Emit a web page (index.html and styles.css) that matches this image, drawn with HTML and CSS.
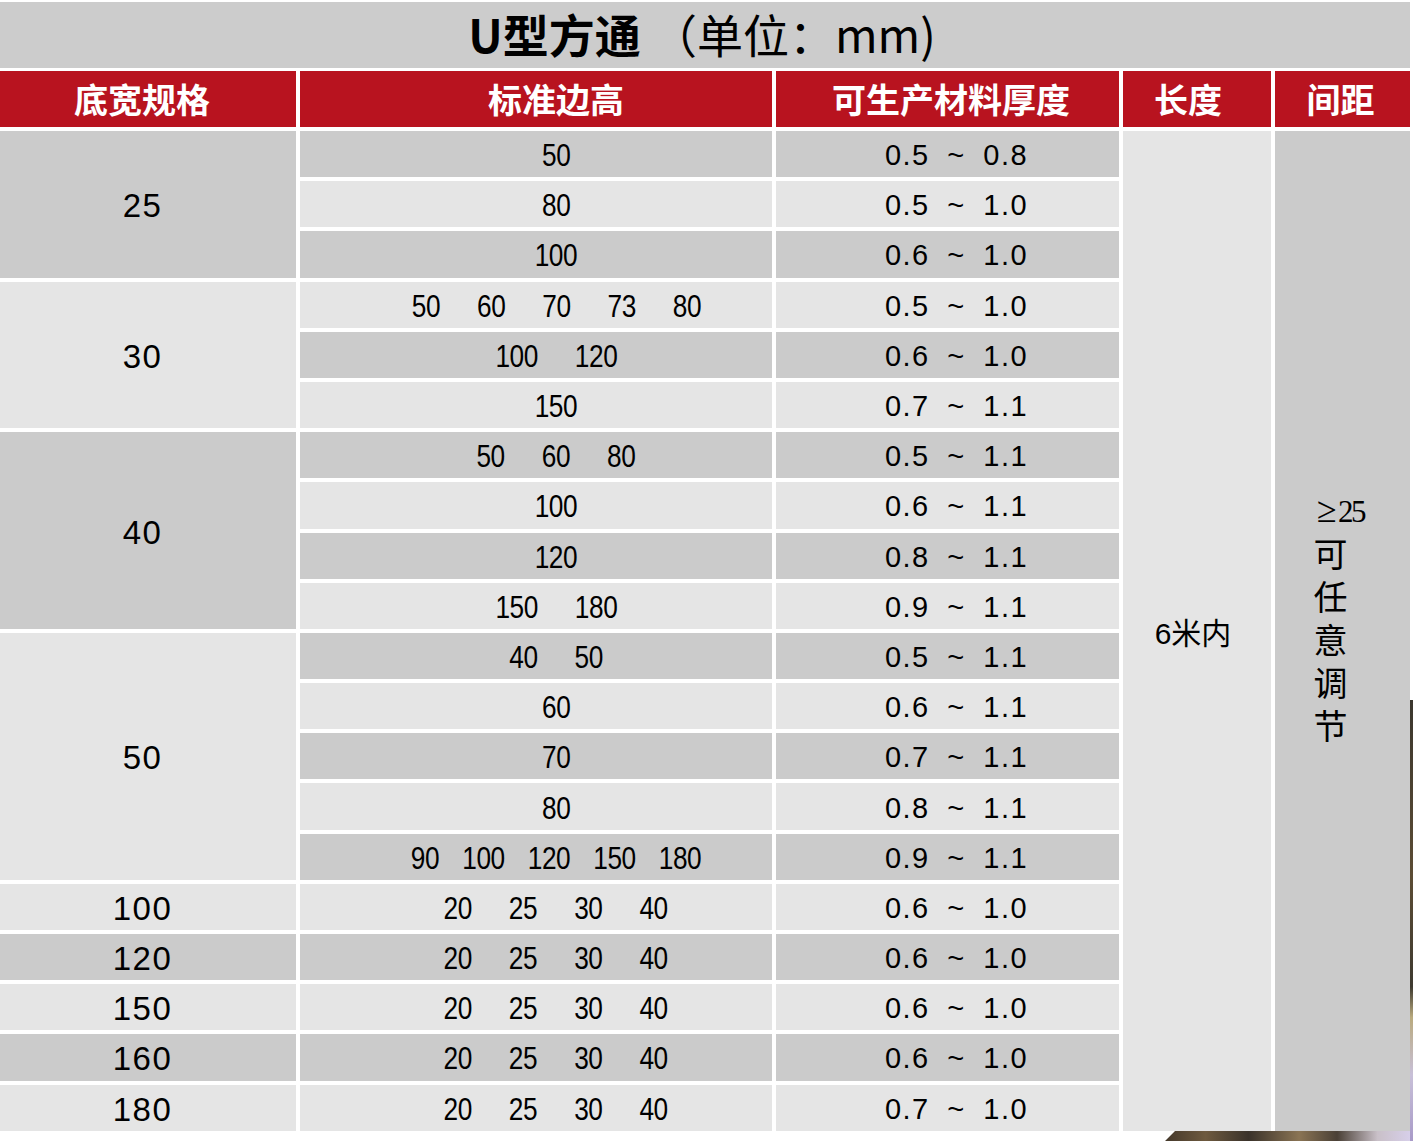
FILE: index.html
```html
<!DOCTYPE html>
<html lang="zh-CN">
<head>
<meta charset="utf-8">
<title>U型方通</title>
<link rel="stylesheet" href="styles.css">
</head>
<body>
<div class="photo"></div>
<div class="sheet">
  <div class="title"><b>U型方通</b> （单位：mm)</div>
  <div class="grid">
    <div class="hd c1">底宽规格</div>
    <div class="hd c2">标准边高</div>
    <div class="hd c3">可生产材料厚度</div>
    <div class="hd c4">长度</div>
    <div class="hd c5">间距</div>

    <div class="cell c1 d s3">25</div>
    <div class="cell c2 d"><div class="nums"><span>50</span></div></div>
    <div class="cell c3 d">0.5 ~ 0.8</div>
    <div class="cell c4 l s20">6米内</div>
    <div class="cell c5 d s20"><div class="vtext"><span class="ge"><span class="gs">≥</span>25</span><span class="vert">可任意调节</span></div></div>
    <div class="cell c2 l"><div class="nums"><span>80</span></div></div>
    <div class="cell c3 l">0.5 ~ 1.0</div>
    <div class="cell c2 d"><div class="nums"><span>100</span></div></div>
    <div class="cell c3 d">0.6 ~ 1.0</div>

    <div class="cell c1 l s3">30</div>
    <div class="cell c2 l"><div class="nums"><span>50</span><span>60</span><span>70</span><span>73</span><span>80</span></div></div>
    <div class="cell c3 l">0.5 ~ 1.0</div>
    <div class="cell c2 d"><div class="nums"><span>100</span><span>120</span></div></div>
    <div class="cell c3 d">0.6 ~ 1.0</div>
    <div class="cell c2 l"><div class="nums"><span>150</span></div></div>
    <div class="cell c3 l">0.7 ~ 1.1</div>

    <div class="cell c1 d s4">40</div>
    <div class="cell c2 d"><div class="nums"><span>50</span><span>60</span><span>80</span></div></div>
    <div class="cell c3 d">0.5 ~ 1.1</div>
    <div class="cell c2 l"><div class="nums"><span>100</span></div></div>
    <div class="cell c3 l">0.6 ~ 1.1</div>
    <div class="cell c2 d"><div class="nums"><span>120</span></div></div>
    <div class="cell c3 d">0.8 ~ 1.1</div>
    <div class="cell c2 l"><div class="nums"><span>150</span><span>180</span></div></div>
    <div class="cell c3 l">0.9 ~ 1.1</div>

    <div class="cell c1 l s5">50</div>
    <div class="cell c2 d"><div class="nums"><span>40</span><span>50</span></div></div>
    <div class="cell c3 d">0.5 ~ 1.1</div>
    <div class="cell c2 l"><div class="nums"><span>60</span></div></div>
    <div class="cell c3 l">0.6 ~ 1.1</div>
    <div class="cell c2 d"><div class="nums"><span>70</span></div></div>
    <div class="cell c3 d">0.7 ~ 1.1</div>
    <div class="cell c2 l"><div class="nums"><span>80</span></div></div>
    <div class="cell c3 l">0.8 ~ 1.1</div>
    <div class="cell c2 d"><div class="nums tight"><span>90</span><span>100</span><span>120</span><span>150</span><span>180</span></div></div>
    <div class="cell c3 d">0.9 ~ 1.1</div>

    <div class="cell c1 l">100</div>
    <div class="cell c2 l"><div class="nums"><span>20</span><span>25</span><span>30</span><span>40</span></div></div>
    <div class="cell c3 l">0.6 ~ 1.0</div>

    <div class="cell c1 d">120</div>
    <div class="cell c2 d"><div class="nums"><span>20</span><span>25</span><span>30</span><span>40</span></div></div>
    <div class="cell c3 d">0.6 ~ 1.0</div>

    <div class="cell c1 l">150</div>
    <div class="cell c2 l"><div class="nums"><span>20</span><span>25</span><span>30</span><span>40</span></div></div>
    <div class="cell c3 l">0.6 ~ 1.0</div>

    <div class="cell c1 d">160</div>
    <div class="cell c2 d"><div class="nums"><span>20</span><span>25</span><span>30</span><span>40</span></div></div>
    <div class="cell c3 d">0.6 ~ 1.0</div>

    <div class="cell c1 l">180</div>
    <div class="cell c2 l"><div class="nums"><span>20</span><span>25</span><span>30</span><span>40</span></div></div>
    <div class="cell c3 l">0.7 ~ 1.0</div>
  </div>
</div>
</body>
</html>
```
FILE: styles.css
```css
html {
  margin: 0;
  padding: 0;
  background: #ffffff;
}

body {
  margin: 0;
  padding: 0;
  width: 1413px;
  height: 1141px;
  overflow: hidden;
  font-family: "Liberation Sans", "Noto Sans CJK SC", sans-serif;
  color: #000;
}

.photo {
  position: absolute;
  left: 1160px;
  top: 700px;
  width: 253px;
  height: 441px;
  z-index: -1;
  clip-path: polygon(5px 441px, 15px 431px, 15px 0, 253px 0, 253px 441px);
  background: linear-gradient(90deg, #3f3428 0, #6e5a3f 18%, #3a322a 35%, #8a7454 55%, #4a4036 70%, #c9c0c8 86%, #d8d0ec 100%);
}

.photo::after {
  content: "";
  position: absolute;
  right: 0;
  top: 0;
  width: 3px;
  height: 441px;
  background: linear-gradient(180deg, #3b372e 0, #5c4c34 40%, #3e3a30 65%, #b9aa7e 72%, #c8c0d8 85%, #a89ac8 100%);
}

.sheet {
  width: 1410px;
  padding-top: 2px;
  display: flex;
  flex-direction: column;
  gap: 3px;
  background: #ffffff;
}

.title {
  height: 66px;
  background: #cccccc;
  display: flex;
  align-items: center;
  justify-content: center;
  font-family: "Noto Sans CJK SC", sans-serif;
  font-size: 46px;
  font-weight: 400;
  white-space: pre;
  padding-bottom: 4px;
  padding-right: 6px;
  box-sizing: border-box;
}

.title b {
  font-weight: 700;
}

.grid {
  display: grid;
  grid-template-columns: 296px 472px 343px 148px 135px;
  grid-template-rows: 56px;
  grid-auto-rows: 46.2px;
  column-gap: 4px;
  row-gap: 4px;
  background: #ffffff;
}

.c1 { grid-column: 1; }
.c2 { grid-column: 2; }
.c3 { grid-column: 3; }
.c4 { grid-column: 4; }
.c5 { grid-column: 5; }

.s3 { grid-row: span 3; }
.s4 { grid-row: span 4; }
.s5 { grid-row: span 5; }
.s20 { grid-row: span 20; }

.hd {
  background: #b8131f;
  color: #ffffff;
  font-family: "Noto Sans CJK SC", sans-serif;
  font-weight: 700;
  font-size: 34px;
  display: flex;
  align-items: center;
  justify-content: center;
  box-sizing: border-box;
  padding-bottom: 2px;
}

.hd.c1 { padding-right: 12px; }
.hd.c2 { padding-left: 40px; }
.hd.c3 { padding-left: 7px; }
.hd.c4 { padding-right: 18px; }
.hd.c5 { padding-right: 4px; }

.cell {
  display: flex;
  align-items: center;
  justify-content: center;
  box-sizing: border-box;
  white-space: nowrap;
}

.d { background: #cbcbcb; }
.l { background: #e5e5e5; }

.cell.c1 {
  font-size: 33px;
  letter-spacing: 1.5px;
  padding-right: 11px;
  padding-top: 4px;
}

.cell.c2 {
  padding-left: 40px;
  padding-top: 3px;
}

.nums {
  display: flex;
  gap: 45px;
  font-size: 32px;
  letter-spacing: -0.5px;
  transform: scaleX(0.82);
  transform-origin: center;
}

.nums.tight {
  gap: 28px;
}

.cell.c3 {
  font-size: 29px;
  letter-spacing: 1.5px;
  word-spacing: 8px;
  padding-left: 18px;
  padding-top: 3px;
}

.cell.c4 {
  font-size: 30px;
  padding-right: 8px;
}

.cell.c5 {
  padding-bottom: 17px;
  padding-right: 8px;
}

.vtext {
  display: flex;
  flex-direction: column;
  align-items: flex-start;
  gap: 7px;
}

.vtext .ge {
  font-family: "Liberation Serif", serif;
  font-size: 31px;
  letter-spacing: -2.5px;
  line-height: 36px;
  margin-left: 4px;
}

.vtext .gs {
  font-size: 36px;
  letter-spacing: 0;
  margin-right: 1px;
}

.vtext .vert {
  writing-mode: vertical-rl;
  font-family: "Noto Sans CJK SC", sans-serif;
  font-size: 34px;
  line-height: 34px;
  letter-spacing: 9px;
}
```
